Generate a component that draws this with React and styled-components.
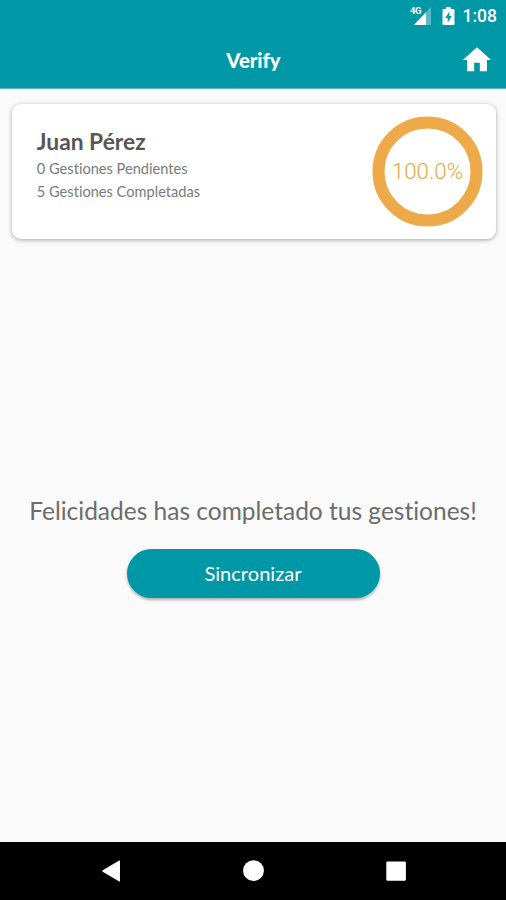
import React, { Component } from 'react';

import styled, { createGlobalStyle } from 'styled-components'

const GlobalStyle = createGlobalStyle`
    * {
        box-sizing: border-box;
    }
    body {
        margin: 0;
        background: #fafafa;
        font-family: Lato, sans-serif;
        font-variant-ligatures: none;
    }
`
const Screen = styled.div`
    display: flex;
    flex-direction: column;
    width: 506px;
    height: 900px;
    overflow: hidden;
    background: #fafafa;
`
const Header = styled.header`
    flex: none;
    height: 89px;
    background: #0097a7;
    border-bottom: 1px solid #5cb3be;
    color: white;
`
const StatusBar = styled.div`
    display: flex;
    justify-content: flex-end;
    align-items: center;
    height: 32px;
    padding-right: 9px;
`
const Signal = styled.svg`
    width: 24px;
    height: 20px;
    margin-right: 9px;
`
const Battery = styled.svg`
    width: 13px;
    height: 20px;
    margin-right: 8px;
`
const Network = styled.text`
    font: 700 9.5px Roboto, sans-serif;
    letter-spacing: -0.5px;
    fill: white;
`
const Time = styled.span`
    font-family: Roboto, sans-serif;
    font-weight: 500;
    font-size: 17.5px;
    line-height: 32px;
`
const Toolbar = styled.div`
    display: grid;
    grid-template-columns: 1fr auto 1fr;
    align-items: center;
    height: 56px;
    padding: 0 11px 0 12px;
`
const Title = styled.h1`
    grid-column: 2;
    margin: 0;
    font-weight: 900;
    font-size: 20.2px;
    line-height: 56px;
`
const HomeButton = styled.button`
    justify-self: end;
    display: flex;
    padding: 0 1px 0 0;
    border: 0;
    background: none;
    color: white;
`
const Card = styled.section`
    flex: none;
    display: flex;
    justify-content: space-between;
    height: 135.5px;
    margin: 14.5px 10px 0.5px 11.5px;
    padding: 12px 13px 0 25.3px;
    border-radius: 9px;
    background: white;
    box-shadow: 0 1px 4px rgba(0, 0, 0, 0.34);
`
const Name = styled.h2`
    margin: 11px 0 2px;
    font-weight: 700;
    font-size: 22.8px;
    line-height: 28px;
    color: #565656;
`
const Detail = styled.p`
    margin: 0;
    font-size: 14.62px;
    line-height: 23px;
    color: #7a7a7a;
`
const Ring = styled.svg`
    width: 111px;
    height: 112px;
`
const Percent = styled.text`
    font: 300 22.3px Roboto, sans-serif;
    text-anchor: middle;
    fill: #eba743;
`
const Main = styled.main`
    flex: 1;
    display: flex;
    flex-direction: column;
    align-items: center;
    padding-top: 254px;
`
const Message = styled.p`
    margin: 0;
    font-size: 24.5px;
    line-height: 34px;
    white-space: nowrap;
    color: #6c6c6c;
`
const SyncButton = styled.button`
    width: 253px;
    height: 49px;
    margin-top: 21px;
    padding: 0 0 1px;
    border: 0;
    border-radius: 25px;
    background: #0097a7;
    box-shadow: 0 2px 3px rgba(0, 0, 0, 0.3);
    font-family: Lato, sans-serif;
    font-size: 20.1px;
    color: white;
`
const NavBar = styled.nav`
    flex: none;
    display: flex;
    justify-content: space-between;
    align-items: center;
    height: 58px;
    padding: 0 99px 0 100px;
    background: black;
`
const NavIcon = styled.svg`
    width: 22px;
    height: 24px;
    fill: white;
`

class App extends Component {
    state = {
        name: "Juan Pérez",
        pending: 0,
        completed: 5
    }
    render() {
        const { name, pending, completed } = this.state
        const percent = completed / (pending + completed) * 100
        return (
            <Screen>
                <GlobalStyle/>
                <Header>
                    <StatusBar>
                        <Signal viewBox="0 0 24 20">
                            <path d="M22 1v18H5z" fill="white" fillOpacity="0.35"/>
                            <path d="M17 6.3V19H5z" fill="white"/>
                            <Network x="1" y="8">4G</Network>
                        </Signal>
                        <Battery viewBox="0 0 13 20">
                            <path d="M4 1h5v2h2.6q.9 0 .9.9v14.2q0 .9-.9.9H1.4q-.9 0-.9-.9V3.9Q.5 3 1.4 3H4z" fill="white"/>
                            <path d="M7.4 5.5L3.3 12h2.4v4.5L9.8 10H7.4z" fill="#0097a7"/>
                        </Battery>
                        <Time>1:08</Time>
                    </StatusBar>
                    <Toolbar>
                        <Title>Verify</Title>
                        <HomeButton aria-label="Inicio">
                            <svg width="34" height="34" viewBox="0 0 24 24" fill="currentColor">
                                <path d="M10 20v-6h4v6h5v-8h3L12 3 2 12h3v8z"/>
                            </svg>
                        </HomeButton>
                    </Toolbar>
                </Header>
                <Card>
                    <div>
                        <Name>{name}</Name>
                        <Detail>{pending} Gestiones Pendientes</Detail>
                        <Detail>{completed} Gestiones Completadas</Detail>
                    </div>
                    <Ring viewBox="0 0 111 112">
                        <circle cx="55.5" cy="55.5" r="49" fill="none" stroke="#eeaa48" strokeWidth="12"/>
                        <Percent x="55.5" y="63">{percent.toFixed(1)}%</Percent>
                    </Ring>
                </Card>
                <Main>
                    <Message>Felicidades has completado tus gestiones!</Message>
                    <SyncButton>Sincronizar</SyncButton>
                </Main>
                <NavBar>
                    <NavIcon viewBox="0 0 22 24">
                        <path d="M19.2 1.5q.8-.4.8.5v20q0 .9-.8.5L2.7 12.7q-.9-.7 0-1.4z"/>
                    </NavIcon>
                    <NavIcon viewBox="0 0 22 24">
                        <circle cx="10.5" cy="11.7" r="10.4"/>
                    </NavIcon>
                    <NavIcon viewBox="0 0 22 24">
                        <rect x="1.3" y="2.4" width="19.6" height="19.4" rx="1.3"/>
                    </NavIcon>
                </NavBar>
            </Screen>
        )
    }
}
export default App
